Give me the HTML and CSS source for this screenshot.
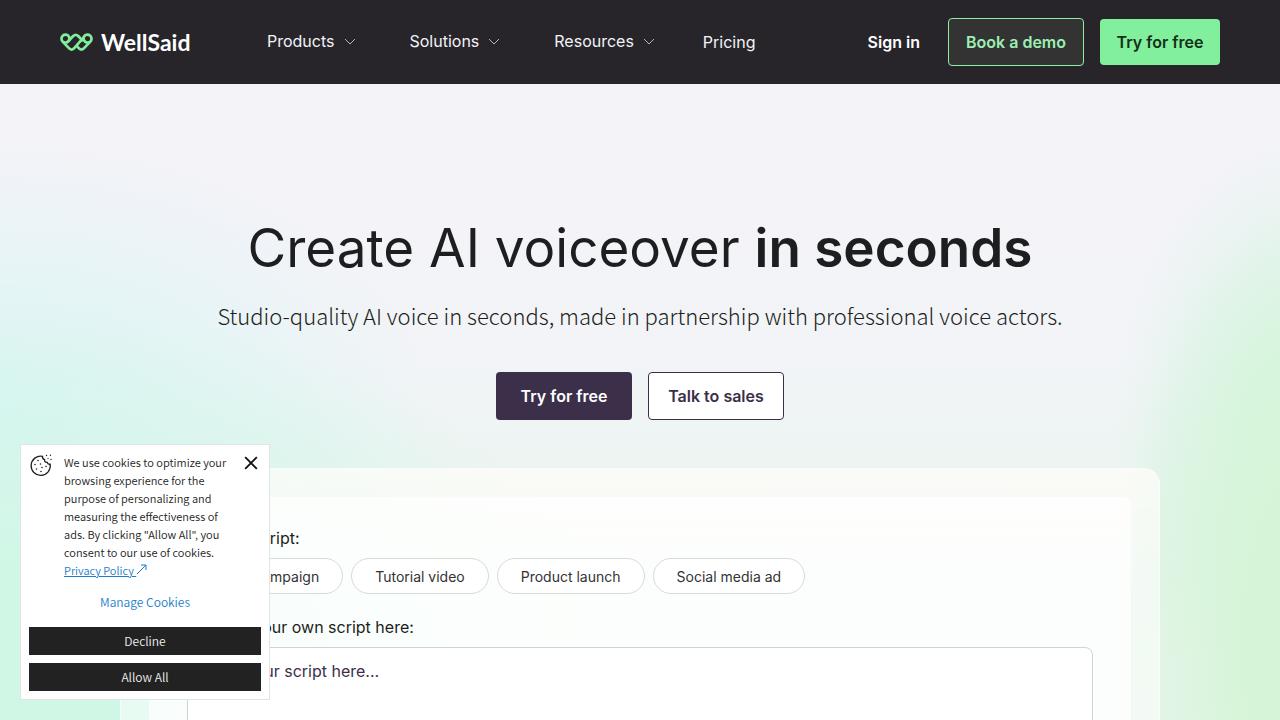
FILE: index.html
```html
<!DOCTYPE html>
<html lang="en">
  <head>
    <meta charset="UTF-8" />
    <meta name="viewport" content="width=device-width, initial-scale=1.0" />
    <link rel="stylesheet" href="styles.css">
    <title>WellSaid</title>
  </head>
  <body>
    <header class="header">
      <a class="logo" href="#">
        <svg width="33" height="19" viewBox="0 0 33 19" fill="none" stroke="#82ee9c" stroke-width="2.7" stroke-linejoin="round">
          <path d="M2.6 8.6 L9.4 15.6 Q11.6 17.6 13.8 15.6 L23.9 4.2 M2.6 8.6 A4.1 4.1 0 1 1 8.6 3 M8.6 3 Q10.6 6 8 8.6 Q5.6 10.6 2.6 8.6" />
          <path d="M8 8.6 L13.2 3 Q15.8 0.6 18.2 3 L23 8.2 M30.4 8.6 L23.6 15.6 Q21.4 17.6 19.2 15.6 L17 13.2 M30.4 8.6 A4.1 4.1 0 1 0 24.4 3 Q22.4 6 25 8.6 Q27.4 10.6 30.4 8.6" />
        </svg>
        <span>WellSaid</span>
      </a>
      <nav class="nav">
        <a href="#">Products
          <svg class="chevron" viewBox="0 0 12 7"><path d="M1 1l5 5 5-5" /></svg>
        </a>
        <a href="#">Solutions
          <svg class="chevron" viewBox="0 0 12 7"><path d="M1 1l5 5 5-5" /></svg>
        </a>
        <a href="#">Resources
          <svg class="chevron" viewBox="0 0 12 7"><path d="M1 1l5 5 5-5" /></svg>
        </a>
      </nav>
      <a class="pricing" href="#">Pricing</a>
      <div class="actions">
        <a class="signin" href="#">Sign in</a>
        <a class="btn btn-demo" href="#">Book a demo</a>
        <a class="btn btn-green" href="#">Try for free</a>
      </div>
    </header>

    <main class="hero">
      <h1>Create AI voiceover <strong>in seconds</strong></h1>
      <p class="subtitle">Studio-quality AI voice in seconds, made in partnership with professional voice actors.</p>
      <div class="cta">
        <a class="btn btn-dark" href="#">Try for free</a>
        <a class="btn btn-light" href="#">Talk to sales</a>
      </div>

      <div class="frame">
        <form class="panel">
          <p class="label">Select a script:</p>
          <div class="chips">
            <button type="button">Brand campaign</button>
            <button type="button">Tutorial video</button>
            <button type="button">Product launch</button>
            <button type="button">Social media ad</button>
          </div>
          <label class="label" for="script">Or enter your own script here:</label>
          <textarea id="script" placeholder="Type your script here..."></textarea>
        </form>
      </div>
    </main>

    <div class="cookies">
      <div class="cookies-top">
        <svg class="cookie-icon" viewBox="0 0 24 24">
          <path d="M13.5 3.3 A9.6 9.6 0 1 0 21.2 11.2 Q18.6 11.6 18.2 9.4 Q15.2 9.6 15.6 6.6 Q13.2 6 13.5 3.3 Z" />
          <g class="crumbs">
            <circle cx="9" cy="7.5" r="0.8" />
            <circle cx="6" cy="11.5" r="0.8" />
            <circle cx="11.5" cy="11" r="0.8" />
            <circle cx="7.5" cy="16" r="0.8" />
            <circle cx="12" cy="18.5" r="0.8" />
            <circle cx="13" cy="14.5" r="0.8" />
            <circle cx="17" cy="13.5" r="0.8" />
            <circle cx="17.5" cy="2.5" r="0.7" />
            <circle cx="21.5" cy="2.3" r="0.7" />
            <circle cx="19" cy="5.6" r="0.7" />
            <circle cx="22" cy="6.5" r="0.7" />
          </g>
        </svg>
        <p>We use cookies to optimize your browsing experience for the purpose of personalizing and measuring the effectiveness of ads. By clicking "Allow All", you consent to our use of cookies.
          <a href="#">Privacy Policy <svg class="arrow" viewBox="0 0 11 11"><path d="M1 10L10 1M5 1h5v5" /></svg></a></p>
        <button class="close" type="button" aria-label="Close">
          <svg viewBox="0 0 12 12"><path d="M1 1l10 10M11 1L1 11" /></svg>
        </button>
      </div>
      <button class="manage" type="button">Manage Cookies</button>
      <button class="choice" type="button">Decline</button>
      <button class="choice" type="button">Allow All</button>
    </div>
  </body>
</html>
```
FILE: styles.css
```css
* {
  box-sizing: border-box;
}
body {
  margin: 0;
  color: #1d1e20;
  font-family: Inter, "Liberation Sans", sans-serif;
  font-size: 16px;
}
a {
  color: inherit;
  text-decoration: none;
}
button,
textarea {
  font-family: inherit;
}

/* header */
.header {
  display: flex;
  align-items: center;
  height: 84px;
  padding: 0 60px;
  background-color: #27252a;
  color: #f3f3f8;
}
.logo {
  display: flex;
  align-items: center;
  gap: 8px;
  width: 207px;
  color: #fff;
  font-family: Lato, sans-serif;
  font-size: 23px;
  font-weight: 700;
}
.nav {
  display: flex;
  gap: 54px;
  padding-bottom: 2px;
}
.nav a {
  display: flex;
  align-items: center;
  gap: 9px;
}
.chevron {
  width: 12px;
  height: 7px;
  fill: none;
  stroke: #d8d8dc;
  stroke-width: 0.8;
}
.pricing {
  margin-left: 48px;
}
.actions {
  display: flex;
  align-items: center;
  gap: 16px;
  margin-left: auto;
}
.signin {
  margin-right: 12px;
  color: #fff;
  font-weight: 600;
}
.btn {
  display: flex;
  align-items: center;
  justify-content: center;
  width: 136px;
  height: 48px;
  border: 1px solid transparent;
  border-radius: 4px;
  font-size: 16px;
  font-weight: 600;
}
.btn-demo {
  background-color: #333;
  border-color: #8bf0a4;
  color: #9defb3;
}
.btn-green {
  width: 120px;
  height: 46px;
  background-color: #82ef9c;
  color: #12301a;
}
.btn-dark {
  background-color: #3b2f4a;
  color: #fff;
}
.btn-light {
  background-color: #fff;
  border-color: #3b2f4a;
  color: #3b2f4a;
}

/* hero */
.hero {
  padding: 128px 120px 60px;
  background:
    radial-gradient(ellipse 17% 64% at 104% 90%, #d6f5d8 40%, transparent),
    radial-gradient(ellipse 14% 42% at 101% 62%, #d5f5e2 20%, transparent),
    radial-gradient(ellipse 48% 50% at 0% 92%, #d0f7e6 25%, transparent),
    radial-gradient(ellipse 34% 38% at 0% 58%, #d8f5f3 0%, transparent),
    linear-gradient(#f3f3f8 30%, #f2f4f7 50%, #e9f4ee 75%);
  background-attachment: fixed;
}
h1 {
  margin: 0;
  font-size: 53px;
  font-weight: 400;
  line-height: 72px;
  text-align: center;
}
h1 strong {
  font-weight: 600;
}
.subtitle {
  margin: 12px 0 38px;
  font-family: "Noto Sans CJK SC", sans-serif;
  font-size: 22px;
  font-weight: 300;
  line-height: 38px;
  text-align: center;
}
.cta {
  display: flex;
  justify-content: center;
  gap: 16px;
}
.frame {
  max-width: 1040px;
  margin: 48px auto 0;
  padding: 28px;
  background-color: rgba(255, 255, 255, 0.5);
  background-image: linear-gradient(rgba(255, 251, 245, 0.5), transparent 120px);
  border: 1px solid rgba(255, 255, 255, 0.6);
  border-radius: 16px;
}
.panel {
  padding: 29px 38px 38px;
  background-color: rgba(255, 255, 255, 0.7);
  border-radius: 6px;
}
.label {
  display: block;
  margin: 0 0 8px;
  line-height: 24px;
}
.chips {
  display: flex;
  gap: 8px;
  margin-bottom: 21px;
}
.chips button {
  height: 36px;
  padding: 0 23px;
  background-color: #fff;
  border: 1px solid #d5dbd8;
  border-radius: 18px;
  color: #333;
  font-size: 14px;
}
textarea {
  display: block;
  width: 100%;
  height: 180px;
  padding: 12px 16px;
  background-color: #fff;
  border: 1px solid #cdd6d1;
  border-radius: 8px;
  font-size: 16px;
  line-height: 22px;
  resize: none;
}
textarea::placeholder {
  color: #3b2f4a;
}

/* cookie notice */
.cookies {
  position: fixed;
  left: 20px;
  bottom: 20px;
  display: flex;
  flex-direction: column;
  width: 250px;
  padding: 8px;
  background-color: #fff;
  border: 1px solid #dfe5e3;
  color: #222;
  font-family: "Noto Sans CJK SC", sans-serif;
  font-weight: 350;
}
.cookies-top {
  display: flex;
  align-items: flex-start;
}
.cookie-icon {
  width: 24px;
  height: 24px;
  margin-right: 11px;
  fill: none;
  stroke: #222;
  stroke-width: 1.3;
}
.crumbs {
  fill: #222;
  stroke: none;
}
.cookies p {
  width: 166px;
  margin: 0;
  font-size: 11px;
  line-height: 18px;
}
.cookies p a {
  color: #1c7ecb;
  text-decoration: underline;
}
.arrow {
  width: 11px;
  height: 11px;
  fill: none;
  stroke: #1c7ecb;
}
.close {
  width: 14px;
  height: 14px;
  margin: 3px 3px 0 auto;
  padding: 0;
  background: none;
  border: 0;
}
.close svg {
  display: block;
  width: 14px;
  height: 14px;
  stroke: #111;
  stroke-width: 1.6;
}
.manage {
  height: 24px;
  margin: 10px 0 14px;
  padding: 0;
  background: none;
  border: 0;
  color: #1c7ecb;
  font-size: 12px;
  font-weight: inherit;
}
.choice {
  height: 28px;
  padding: 0 0 2px;
  background-color: #222;
  border: 0;
  color: #eee;
  font-size: 12px;
  font-weight: inherit;
}
.choice + .choice {
  margin-top: 8px;
}
```
